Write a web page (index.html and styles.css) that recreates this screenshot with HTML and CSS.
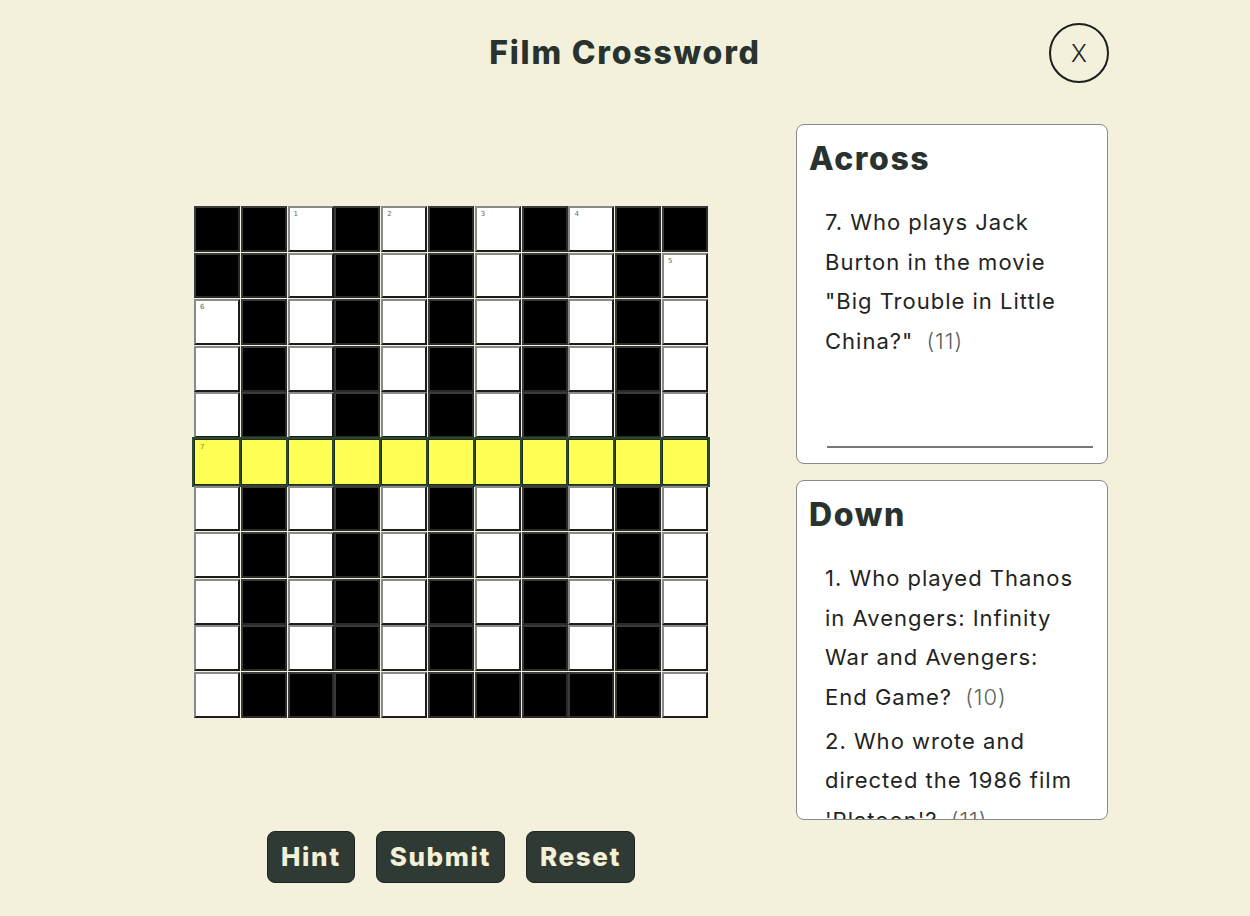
FILE: index.html
```html
<!DOCTYPE html>
<html lang="en">
<head>
<meta charset="utf-8">
<title>Film Crossword</title>
<link rel="stylesheet" href="styles.css">
</head>
<body>
<div class="app">
  <header class="top">
    <div class="spacer"></div>
    <h1 class="title">Film Crossword</h1>
    <button class="close" type="button">X</button>
  </header>
  <main class="main">
    <section class="board">
      <div class="grid">
        <div class="cell b"></div><div class="cell b"></div><div class="cell w"><span class="num">1</span></div><div class="cell b"></div><div class="cell w"><span class="num">2</span></div><div class="cell b"></div><div class="cell w"><span class="num">3</span></div><div class="cell b"></div><div class="cell w"><span class="num">4</span></div><div class="cell b"></div><div class="cell b"></div>
        <div class="cell b"></div><div class="cell b"></div><div class="cell w"></div><div class="cell b"></div><div class="cell w"></div><div class="cell b"></div><div class="cell w"></div><div class="cell b"></div><div class="cell w"></div><div class="cell b"></div><div class="cell w"><span class="num">5</span></div>
        <div class="cell w"><span class="num">6</span></div><div class="cell b"></div><div class="cell w"></div><div class="cell b"></div><div class="cell w"></div><div class="cell b"></div><div class="cell w"></div><div class="cell b"></div><div class="cell w"></div><div class="cell b"></div><div class="cell w"></div>
        <div class="cell w"></div><div class="cell b"></div><div class="cell w"></div><div class="cell b"></div><div class="cell w"></div><div class="cell b"></div><div class="cell w"></div><div class="cell b"></div><div class="cell w"></div><div class="cell b"></div><div class="cell w"></div>
        <div class="cell w"></div><div class="cell b"></div><div class="cell w"></div><div class="cell b"></div><div class="cell w"></div><div class="cell b"></div><div class="cell w"></div><div class="cell b"></div><div class="cell w"></div><div class="cell b"></div><div class="cell w"></div>
        <div class="cell hl"><span class="num">7</span></div><div class="cell hl"></div><div class="cell hl"></div><div class="cell hl"></div><div class="cell hl"></div><div class="cell hl"></div><div class="cell hl"></div><div class="cell hl"></div><div class="cell hl"></div><div class="cell hl"></div><div class="cell hl"></div>
        <div class="cell w"></div><div class="cell b"></div><div class="cell w"></div><div class="cell b"></div><div class="cell w"></div><div class="cell b"></div><div class="cell w"></div><div class="cell b"></div><div class="cell w"></div><div class="cell b"></div><div class="cell w"></div>
        <div class="cell w"></div><div class="cell b"></div><div class="cell w"></div><div class="cell b"></div><div class="cell w"></div><div class="cell b"></div><div class="cell w"></div><div class="cell b"></div><div class="cell w"></div><div class="cell b"></div><div class="cell w"></div>
        <div class="cell w"></div><div class="cell b"></div><div class="cell w"></div><div class="cell b"></div><div class="cell w"></div><div class="cell b"></div><div class="cell w"></div><div class="cell b"></div><div class="cell w"></div><div class="cell b"></div><div class="cell w"></div>
        <div class="cell w"></div><div class="cell b"></div><div class="cell w"></div><div class="cell b"></div><div class="cell w"></div><div class="cell b"></div><div class="cell w"></div><div class="cell b"></div><div class="cell w"></div><div class="cell b"></div><div class="cell w"></div>
        <div class="cell w"></div><div class="cell b"></div><div class="cell b"></div><div class="cell b"></div><div class="cell w"></div><div class="cell b"></div><div class="cell b"></div><div class="cell b"></div><div class="cell b"></div><div class="cell b"></div><div class="cell w"></div>
      </div>
      <div class="actions">
        <button class="btn" type="button">Hint</button>
        <button class="btn" type="button">Submit</button>
        <button class="btn" type="button">Reset</button>
      </div>
    </section>
    <aside class="clues">
      <div class="panel">
        <h2 class="panel-title">Across</h2>
        <ol class="clue-list">
          <li class="clue">7. Who plays Jack Burton in the movie "Big Trouble in Little China?" <span class="len">(11)</span></li>
        </ol>
        <div class="rule"></div>
      </div>
      <div class="panel">
        <h2 class="panel-title">Down</h2>
        <ol class="clue-list">
          <li class="clue">1. Who played Thanos in Avengers: Infinity War and Avengers: End Game? <span class="len">(10)</span></li>
          <li class="clue">2. Who wrote and directed the 1986 film 'Platoon'? <span class="len">(11)</span></li>
        </ol>
      </div>
    </aside>
  </main>
</div>
</body>
</html>
```
FILE: styles.css
```css
* { box-sizing: border-box; }
html, body { margin: 0; padding: 0; }
body {
  background: #f3f1db;
  color: #28332f;
  font-family: "Inter", "Noto Sans", sans-serif;
  width: 1250px;
  height: 916px;
  overflow: hidden;
}
.app { width: 1250px; }
.top {
  height: 106px;
  display: grid;
  grid-template-columns: 1fr auto 1fr;
  align-items: center;
  padding: 0 141px;
}
.title {
  margin: 0;
  font-size: 32px;
  font-weight: 800;
  line-height: 1.2;
  color: #28332f;
  letter-spacing: 1.8px;
}
.close {
  justify-self: end;
  width: 60px;
  height: 60px;
  border-radius: 50%;
  border: 2px solid #1b1f1d;
  background: transparent;
  font-family: "Inter", sans-serif;
  font-size: 24px;
  font-weight: 300;
  color: #1b1f1d;
  padding: 0;
  cursor: pointer;
}
.main {
  display: flex;
  padding: 0 142px;
  gap: 36px;
}
.board {
  width: 618px;
  display: flex;
  flex-direction: column;
  align-items: center;
  padding-top: 100px;
}
.grid {
  display: grid;
  grid-template-columns: repeat(11, 46px);
  grid-auto-rows: 45.8px;
  gap: 0.8px;
  width: 514px;
}
.cell {
  position: relative;
  border-style: solid;
  border-width: 2px;
}
.cell.w {
  background: #fff;
  border-color: #8a8a8a #1c1c1c #1c1c1c #8a8a8a;
}
.cell.b {
  background: #000;
  border-color: #3a3a3a #2a2a2a #2a2a2a #3a3a3a;
}
.cell.hl {
  background: #ffff55;
  border: 1px solid #1f2d1f;
  outline: 2px solid #2b4a2b;
}
.num {
  position: absolute;
  top: 2px;
  left: 4px;
  font-family: "DejaVu Sans", sans-serif;
  font-size: 7px;
  color: #666;
}
.cell.hl .num { color: #888833; top: 3px; left: 5px; }
.actions {
  display: flex;
  gap: 21px;
  margin-top: 113px;
}
.btn {
  height: 52px;
  padding: 0 13px;
  border: 1px solid #1e2522;
  border-radius: 8px;
  background: #2f3a35;
  color: #f3f0d8;
  font-family: "Inter", sans-serif;
  font-size: 26px;
  font-weight: 800;
  letter-spacing: 1.6px;
  cursor: pointer;
}
.clues {
  width: 312px;
  display: flex;
  flex-direction: column;
  gap: 16px;
  padding-top: 18px;
}
.panel {
  height: 340px;
  background: #fff;
  border: 1px solid #8a8a8a;
  border-radius: 8px;
  padding: 0 14px 15px;
  display: flex;
  flex-direction: column;
  overflow: hidden;
}
.panel-title {
  margin: 15px 0 0 -2px;
  font-size: 32px;
  font-weight: 800;
  line-height: 1.2;
  color: #28332f;
  letter-spacing: 1.6px;
}
.clue-list {
  list-style: none;
  margin: 25px 0 0;
  padding: 0 8px 0 14px;
}
.clue {
  font-size: 22px;
  line-height: 39.5px;
  color: #1f2422;
  margin-bottom: 4.5px;
  letter-spacing: 1px;
}
.len {
  color: #5d6360;
  margin-left: 6px;
  font-weight: 300;
}
.rule {
  margin-top: auto;
  margin-left: 16px;
  height: 2px;
  background: #777;
}
```
